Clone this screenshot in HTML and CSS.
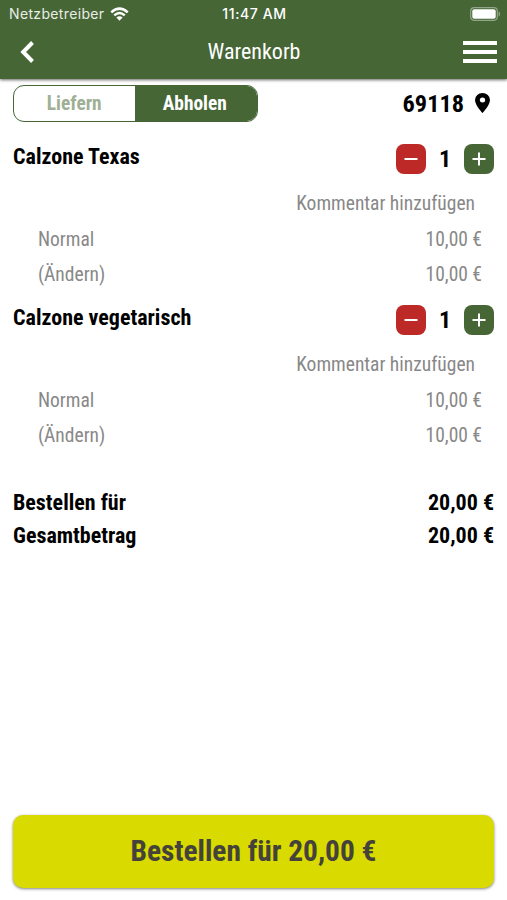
FILE: index.html
```html
<!DOCTYPE html>
<html lang="de">
<head>
<meta charset="utf-8">
<title>Warenkorb</title>
<link rel="stylesheet" href="styles.css">
</head>
<body>
<header class="top">
  <div class="status">
    <div class="carrier"><span>Netzbetreiber</span>
      <svg class="wifi" width="19" height="14" viewBox="0 0 19 14" fill="#fff"><path d="M.4 4.400Q9.500-3.800 18.600 4.400L16.900 6.200Q9.500-.4 2.100 6.200z"/><path d="M3.400 7.500Q9.500 2 15.600 7.500L13.900 9.300Q9.500 5.400 5.100 9.300z"/><path d="M6.400 10.600Q9.500 7.900 12.600 10.600L9.500 13.700z"/></svg>
    </div>
    <span class="time">11:47 AM</span>
    <svg class="battery" width="31" height="14" viewBox="0 0 31 14"><rect x=".7" y=".7" width="26.600" height="12.600" rx="3.500" fill="none" stroke="#94a58a" stroke-width="1.200"/><rect x="2.300" y="2.300" width="23.400" height="9.400" rx="2" fill="#fff"/><path d="M28.600 4.500c2 .7 2 4.300 0 5z" fill="#94a58a"/></svg>
  </div>
  <nav class="bar">
    <svg class="back" width="14" height="22" viewBox="0 0 14 22"><path d="M12.500 1.500 3.200 11l9.300 9.500" fill="none" stroke="#fff" stroke-width="4"/></svg>
    <h1>Warenkorb</h1>
    <div class="menu"><i></i><i></i><i></i></div>
  </nav>
</header>
<main>
  <div class="mode">
    <div class="toggle"><span>Liefern</span><span class="on">Abholen</span></div>
    <div class="place"><span>69118</span><svg width="15" height="20" viewBox="0 0 14 20" preserveAspectRatio="none"><path fill="#000" fill-rule="evenodd" d="M7 0a7 7 0 0 0-7 7c0 5.200 7 13 7 13s7-7.800 7-13a7 7 0 0 0-7-7zm0 4.500a2.500 2.500 0 1 1 0 5 2.500 2.500 0 0 1 0-5z"/></svg></div>
  </div>
  <section class="item">
    <div class="head"><h2>Calzone Texas</h2>
      <div class="qty"><button class="minus"><svg width="30" height="30" viewBox="0 0 30 30"><path d="M8.500 15h13" stroke="#fff" stroke-width="2"/></svg></button><b>1</b><button class="plus"><svg width="30" height="30" viewBox="0 0 30 30"><path d="M8.500 15h13M15 8.500v13" stroke="#fff" stroke-width="2"/></svg></button></div>
    </div>
    <p class="comment">Kommentar hinzufügen</p>
    <p class="line"><span>Normal</span><span class="price">10,00 €</span></p>
    <p class="line"><span>(Ändern)</span><span class="price">10,00 €</span></p>
  </section>
  <section class="item">
    <div class="head"><h2>Calzone vegetarisch</h2>
      <div class="qty"><button class="minus"><svg width="30" height="30" viewBox="0 0 30 30"><path d="M8.500 15h13" stroke="#fff" stroke-width="2"/></svg></button><b>1</b><button class="plus"><svg width="30" height="30" viewBox="0 0 30 30"><path d="M8.500 15h13M15 8.500v13" stroke="#fff" stroke-width="2"/></svg></button></div>
    </div>
    <p class="comment">Kommentar hinzufügen</p>
    <p class="line"><span>Normal</span><span class="price">10,00 €</span></p>
    <p class="line"><span>(Ändern)</span><span class="price">10,00 €</span></p>
  </section>
  <section class="totals">
    <p><span>Bestellen für</span><span>20,00 €</span></p>
    <p><span>Gesamtbetrag</span><span>20,00 €</span></p>
  </section>
</main>
<button class="order"><span>Bestellen für 20,00 €</span></button>
</body>
</html>
```
FILE: styles.css
```css
* { box-sizing: border-box; margin: 0; padding: 0; }
body {
  width: 507px; height: 900px; display: flex; flex-direction: column;
  background: #fff; color: #000; overflow: hidden;
  font-family: "Roboto Condensed", Roboto, sans-serif; font-stretch: 75%;
}
button { border: 0; font: inherit; font-stretch: inherit; }
svg { display: block; }
.top { height: 79px; background: #466636; color: #fff; box-shadow: 0 1px 3px rgba(0,0,0,.6); }
.status {
  height: 27px; padding: 0 6px 0 9px; display: grid; grid-template-columns: 1fr auto 1fr; align-items: center;
  font: 14px/27px Inter, sans-serif;
}
.carrier { display: flex; align-items: center; gap: 6px; letter-spacing: .35px; color: #e8ede5; }
.time { font-weight: 500; font-size: 14px; letter-spacing: .6px; margin-right: 1px; }
.battery { justify-self: end; }
.bar { height: 50px; padding: 0 10px 0 20px; display: grid; grid-template-columns: 1fr auto 1fr; align-items: center; }
.bar h1 { font-size: 22px; font-weight: 400; padding-right: 9px; margin-top: -1px; }
.menu { justify-self: end; width: 34px; display: grid; gap: 5px; }
.menu i { height: 4px; background: #fff; }
main { flex: 1; }
.mode { height: 49px; padding: 6px 17px 6px 13px; display: flex; justify-content: space-between; }
.toggle {
  width: 245px; height: 37px; display: flex; border: 1px solid #466636; border-radius: 11px; overflow: hidden;
  font-size: 19.400px; line-height: 35px; font-weight: 700; text-align: center; color: #a0b096;
}
.toggle span { flex: 1; }
.toggle .on { background: #466636; color: #fff; padding-right: 2px; }
.place { display: flex; align-items: center; gap: 11px; font-size: 24.300px; font-weight: 700; height: 36px; }
.item { height: 161px; padding: 15px 13px 0; }
.head { display: flex; justify-content: space-between; height: 43px; }
.head h2 { font-size: 22px; line-height: 27px; font-weight: 700; }
.qty { display: flex; align-items: center; height: 32px; font-size: 24px; }
.qty b { width: 38px; text-align: center; }
.qty button { width: 30px; height: 30px; border-radius: 8px; }
.minus { background: #bd2926; }
.plus { background: #466636; }
.comment, .line { height: 35.500px; line-height: 35.500px; font-size: 19.500px; color: #888; }
.comment { padding-right: 19px; text-align: right; }
.line { display: flex; justify-content: space-between; padding: 0 12px 0 25px; }
.totals { padding: 36px 13px 0; font-size: 22px; line-height: 33px; font-weight: 700; }
.totals p { display: flex; justify-content: space-between; }
.order {
  height: 73px; margin: 0 13px 12px; padding-bottom: 2px; border-radius: 10px; background: #d8da00; color: #44423a;
  font-size: 29.400px; font-weight: 700; box-shadow: 0 1px 3px rgba(0,0,0,.5);
}
```
